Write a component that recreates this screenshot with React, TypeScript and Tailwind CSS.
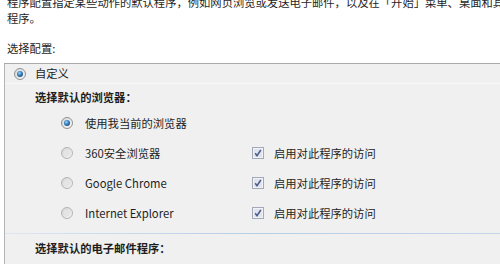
const Radio = ({ checked }: { checked?: boolean }) => (
  <svg width="12" height="12" viewBox="0 0 12 12" className="shrink-0">
    <defs>
      <radialGradient id="dot" cx="40%" cy="35%" r="65%">
        <stop offset="0%" stopColor="#9fd3f7" />
        <stop offset="55%" stopColor="#3a86c4" />
        <stop offset="100%" stopColor="#1d4f7f" />
      </radialGradient>
      <linearGradient id="ring" x1="0" y1="0" x2="1" y2="1">
        <stop offset="0%" stopColor="#d6d6d6" />
        <stop offset="100%" stopColor="#fafafa" />
      </linearGradient>
      <linearGradient id="off" x1="0" y1="0" x2="1" y2="1">
        <stop offset="0%" stopColor="#d2d2d2" />
        <stop offset="100%" stopColor="#f6f6f6" />
      </linearGradient>
    </defs>
    {checked ? (
      <>
        <circle cx="6" cy="6" r="5.5" fill="url(#ring)" stroke="#8f9192" strokeWidth="1" />
        <circle cx="6" cy="6" r="3" fill="url(#dot)" />
      </>
    ) : (
      <>
        <circle cx="6" cy="6" r="5.5" fill="url(#off)" stroke="#b3b4b5" strokeWidth="1" />
        <circle cx="6" cy="6" r="3.2" fill="#e4e4e4" />
      </>
    )}
  </svg>
);

const Check = () => (
  <svg width="12" height="12" viewBox="0 0 12 12" className="shrink-0">
    <rect x="0.5" y="0.5" width="11" height="11" fill="#f2f3f6" stroke="#a4a9b8" />
    <rect x="2" y="2" width="8" height="8" fill="#dfe3ec" />
    <path d="M3.2 6.2 L5 8.6 L8.8 3" fill="none" stroke="#4a5a8c" strokeWidth="1.5" />
  </svg>
);

const browsers = [
  { name: "360安全浏览器" },
  { name: "Google Chrome" },
  { name: "Internet Explorer" },
];

export default function App() {
  return (
    <div
      className="w-[500px] h-[264px] overflow-hidden bg-white text-[11.3px] text-[#1e1e1e]"
      style={{ fontFamily: '"Noto Sans CJK SC", "Noto Sans", sans-serif' }}
    >
      <div className="-mt-[6px] pl-[7px] leading-[16px]">
        <div className="whitespace-nowrap overflow-hidden">
          程序配置指定某些动作的默认程序，例如网页浏览或发送电子邮件，以及在「开始」菜单、桌面和其他位置可访问哪些
        </div>
        <div>程序。</div>
      </div>
      <div className="mt-[14px] pl-[7px] leading-[16px]">选择配置:</div>

      <div className="mt-[7px] ml-[4px] h-[300px] border-t border-l border-t-[#a9a9a9] border-l-[#b4b4b4] bg-[#f0f0f0]">
        <div className="h-[19px] flex items-center pl-[9px]">
          <Radio checked />
          <span className="ml-[9px]">自定义</span>
        </div>
        <div className="h-px bg-[#f8f8f8]" />
        <div className="h-[24px] pt-[2px] flex items-center pl-[30px] font-bold">选择默认的浏览器：</div>

        <div className="h-[30px] flex items-center pl-[56px]">
          <Radio checked />
          <span className="ml-[12px]">使用我当前的浏览器</span>
        </div>
        {browsers.map((b) => (
          <div key={b.name} className="h-[30px] flex items-center pl-[56px]">
            <Radio />
            <span className="ml-[12px] w-[167px]">{b.name}</span>
            <Check />
            <span className="ml-[10px]">启用对此程序的访问</span>
          </div>
        ))}

        <div className="mt-[5px] h-px bg-gradient-to-r from-[#dce6f0] via-[#b6cde4] to-[#c4d6e8]" />
        <div className="h-[28px] flex items-center pl-[30px] font-bold">选择默认的电子邮件程序：</div>
      </div>
    </div>
  );
}
